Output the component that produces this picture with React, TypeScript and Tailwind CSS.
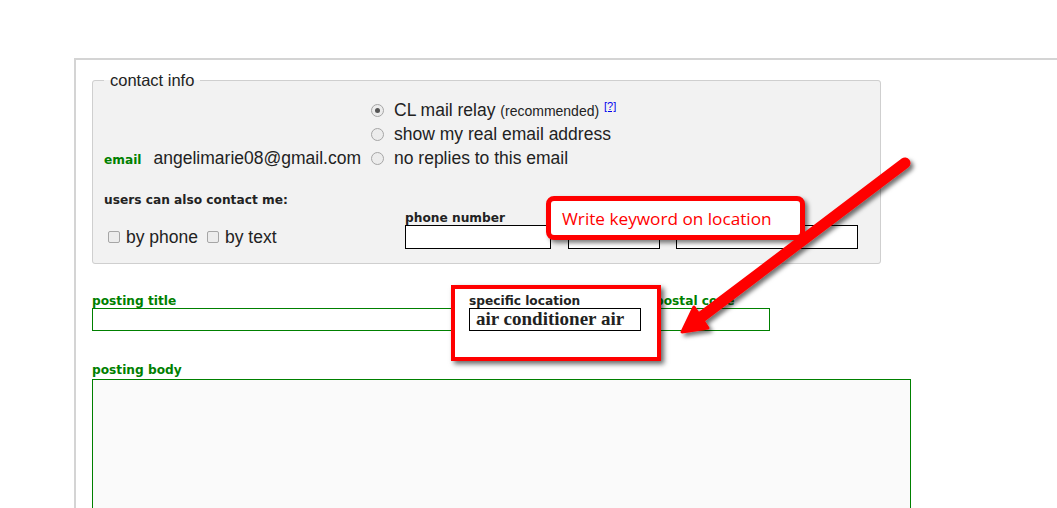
import React from 'react'

const SANS = "font-['Liberation_Sans',Arial,sans-serif]"
const LABEL = "font-['DejaVu_Sans',Verdana,sans-serif] text-[12.2px] font-bold leading-[14px]"

function Radio({ checked }: { checked?: boolean }) {
  return (
    <span className="flex h-[13px] w-[13px] items-center justify-center rounded-full border border-[#a6a6a6] bg-[#ececec]">
      {checked && <span className="h-[5px] w-[5px] rounded-full bg-[#555]" />}
    </span>
  )
}

function Checkbox() {
  return <span className="inline-block h-[12px] w-[12px] rounded-[2px] border border-[#a6a6a6] bg-[#ececec]" />
}

function RadioRow({ checked, children }: { checked?: boolean; children: React.ReactNode }) {
  return (
    <div className="flex h-[24px] items-center gap-[10px]">
      <Radio checked={checked} />
      <span>{children}</span>
    </div>
  )
}

function Arrow() {
  return (
    <svg className="pointer-events-none absolute left-0 top-0" width="1057" height="508">
      <defs>
        <filter id="shade" x="-10%" y="-10%" width="130%" height="130%">
          <feDropShadow dx="3" dy="3" stdDeviation="2" floodColor="#000" floodOpacity="0.55" />
        </filter>
      </defs>
      <g filter="url(#shade)">
        <line x1="905" y1="163" x2="700" y2="318" stroke="#ff0000" strokeWidth="11" strokeLinecap="round" />
        <polygon points="682,332 708,328 694,307" fill="#ff0000" stroke="#ff0000" strokeWidth="3" strokeLinejoin="round" />
      </g>
    </svg>
  )
}

export default function App() {
  return (
    <div className={`relative h-[508px] w-[1057px] overflow-hidden bg-white pl-[74px] pt-[58px] text-[#222] ${SANS}`}>
      <div className="h-[460px] border-l-2 border-t-2 border-[#d4d4d4] pl-[16px] pt-[11px]">
        <fieldset className="w-[789px] rounded-[3px] border border-[#cfcfcf] bg-[#f2f2f2] pb-[14px] pl-[11px] pr-[11px]">
          <legend className="px-[6px] text-[16.5px] leading-[18px]">contact info</legend>

          <div className="mt-[9px] flex items-end text-[17.5px] leading-[24px]">
            <div className="flex w-[267px] items-baseline">
              <span className={`${LABEL} mr-[12px] text-[#008000]`}>email</span>
              <span>angelimarie08@gmail.com</span>
            </div>
            <div className="flex flex-col">
              <RadioRow checked>
                CL mail relay <span className="text-[14px]">(recommended)</span>{' '}
                <sup className="text-[11px] text-[#0000ee] underline">[?]</sup>
              </RadioRow>
              <RadioRow>show my real email address</RadioRow>
              <RadioRow>no replies to this email</RadioRow>
            </div>
          </div>

          <div className="mt-[22px] flex items-end">
            <div className="w-[301px]">
              <div className={`${LABEL} leading-[16px]`}>users can also contact me:</div>
              <div className="mt-[17px] flex h-[24px] items-center text-[17.5px]">
                <span className="ml-[4px] mr-[6px] flex items-center"><Checkbox /></span>
                <span>by phone</span>
                <span className="ml-[9px] mr-[6px] flex items-center"><Checkbox /></span>
                <span>by text</span>
              </div>
            </div>
            <div>
              <div className={LABEL}>phone number</div>
              <div className="flex">
                <div className="h-[24px] w-[146px] border border-black bg-white" />
                <div className="ml-[17px] h-[24px] w-[92px] border border-black bg-white" />
                <div className="ml-[16px] h-[24px] w-[182px] border border-black bg-white" />
              </div>
            </div>
          </div>
        </fieldset>

        <div className="mt-[30px] flex">
          <div>
            <div className={`${LABEL} text-[#008000]`}>posting title</div>
            <div className="h-[23px] w-[370px] border border-[#008000] bg-white" />
          </div>
          <div className="relative z-10 ml-[7px]">
            <div className="absolute -bottom-[30px] -left-[18px] -right-[20px] -top-[9px] border-[4px] border-[#ff0000] bg-white shadow-[3px_3px_5px_rgba(0,0,0,0.6)]" />
            <div className={`${LABEL} relative`}>specific location</div>
            <div className="relative flex h-[23px] w-[172px] items-center border border-black bg-white pl-[6px] font-['Liberation_Serif',serif] text-[19px] font-bold">
              air conditioner air
            </div>
          </div>
          <div className="ml-[14px]">
            <div className={`${LABEL} text-[#008000]`}>postal code</div>
            <div className="h-[23px] w-[115px] border border-[#008000] bg-white" />
          </div>
        </div>

        <div className={`${LABEL} mt-[32px] text-[#008000]`}>posting body</div>
        <div className="mt-[2px] h-[200px] w-[819px] border border-[#008000] bg-[#fafafa]" />
      </div>

      <div className="absolute left-[546px] top-[196px] flex h-[44px] w-[259px] items-center rounded-[8px] border-[5px] border-[#ff0000] bg-white pl-[11px] pt-[2px] font-['Open_Sans',sans-serif] text-[17.2px] text-[#f00] shadow-[3px_3px_4px_rgba(0,0,0,0.5)]">
        Write keyword on location
      </div>

      <Arrow />
    </div>
  )
}
